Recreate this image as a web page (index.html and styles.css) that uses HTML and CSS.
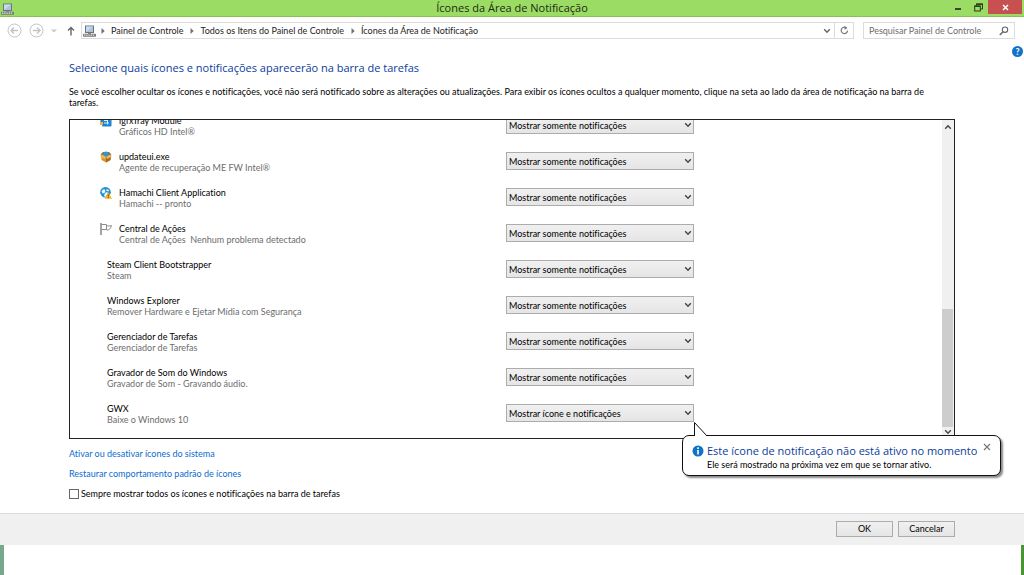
FILE: index.html
```html
<!DOCTYPE html>
<html lang="pt-BR">
<head>
<meta charset="utf-8">
<title>Ícones da Área de Notificação</title>
<link rel="stylesheet" href="styles.css">
</head>
<body>
<svg class="sprite" aria-hidden="true">
  <symbol id="pc" viewBox="0 0 13 12">
    <rect x="2" y=".5" width="9" height="7.5" fill="#6d747c"/>
    <rect x="3" y="1.5" width="7" height="5.5" fill="#a9c4dc"/>
    <path d="M3 7V1.5h7z" fill="#c9dbea"/>
    <rect x="5" y="8" width="3" height="1" fill="#8a8a8a"/>
    <rect x="0" y="8.7" width="13" height="3" rx=".6" fill="#77797c"/>
    <path d="M1 10.2h11" stroke="#e4e4e4" stroke-width="1.2" stroke-dasharray="1.4 .8"/>
  </symbol>
  <symbol id="chev" viewBox="0 0 8 6"><path d="M1.200 1.200L4 4.200l2.800-3" fill="none" stroke="currentColor" stroke-width="1.400"/></symbol>
  <symbol id="sep" viewBox="0 0 4 6"><path d="M.5 0L3.7 3 .5 6z" fill="#707070"/></symbol>
</svg>

<header class="titlebar">
  <svg class="app-icon"><use href="#pc"/></svg>
  <h1 class="window-title">Ícones da Área de Notificação</h1>
  <div class="window-controls">
    <button class="win-btn" type="button" aria-label="Minimizar"><svg width="8" height="8" viewBox="0 0 8 8"><path d="M1 6h6" stroke="#222" stroke-width="1.6"/></svg></button>
    <button class="win-btn" type="button" aria-label="Restaurar"><svg width="9" height="9" viewBox="0 0 9 9" fill="none" stroke="#2b3a1c"><path d="M2.5 2.5v-1.500h6v5h-2"/><path d="M2 1.200h7" stroke-width="1.300"/><rect x=".7" y="3" width="5.600" height="5"/><path d="M.5 3.200h6" stroke-width="1.300"/></svg></button>
    <button class="win-btn win-close" type="button" aria-label="Fechar"><svg width="7" height="7" viewBox="0 0 7 7"><path d="M1 1l5 5M6 1L1 6" stroke="#fff" stroke-width="1.500"/></svg></button>
  </div>
</header>

<nav class="toolbar">
  <button class="nav-btn" type="button" aria-label="Voltar"><svg width="15" height="15" viewBox="0 0 15 15" fill="none" stroke="#c4c4c4"><circle cx="7.500" cy="7.500" r="6.500"/><path d="M11 7.500H4.500M7 4.500l-3 3 3 3" stroke-width="1.400"/></svg></button>
  <button class="nav-btn" type="button" aria-label="Avançar"><svg width="15" height="15" viewBox="0 0 15 15" fill="none" stroke="#c4c4c4"><circle cx="7.500" cy="7.500" r="6.500"/><path d="M4 7.500h6.500M8 4.500l3 3-3 3" stroke-width="1.400"/></svg></button>
  <button class="nav-btn nav-recent" type="button" aria-label="Locais recentes"><svg width="6" height="4" viewBox="0 0 6 4"><path d="M0 .5h6L3 3.500z" fill="#c8c8c8"/></svg></button>
  <button class="nav-btn nav-up" type="button" aria-label="Acima"><svg width="8" height="10" viewBox="0 0 8 10" fill="none" stroke="#666" stroke-width="1.400"><path d="M4 9.500V1.500M1 4.500l3-3 3 3"/></svg></button>
  <div class="address">
    <svg class="app-icon"><use href="#pc"/></svg>
    <svg class="sep"><use href="#sep"/></svg>
    <a class="crumb" href="#">Painel de Controle</a>
    <svg class="sep"><use href="#sep"/></svg>
    <a class="crumb" href="#">Todos os Itens do Painel de Controle</a>
    <svg class="sep"><use href="#sep"/></svg>
    <a class="crumb" href="#">Ícones da Área de Notificação</a>
    <button class="addr-btn addr-drop" type="button" aria-label="Histórico"><svg class="chev"><use href="#chev"/></svg></button>
    <button class="addr-btn addr-refresh" type="button" aria-label="Atualizar"><svg width="9" height="9" viewBox="0 0 9 9"><path d="M6.300 1.800A3.200 3.200 0 1 0 7.600 4.600" fill="none" stroke="#777" stroke-width="1.200"/><path d="M4.500 0v3.800L7.500 2z" fill="#777"/></svg></button>
  </div>
  <label class="search">
    <input class="search-input" type="text" placeholder="Pesquisar Painel de Controle" aria-label="Pesquisar Painel de Controle">
    <svg width="10" height="10" viewBox="0 0 10 10" fill="none" stroke="#666"><circle cx="6" cy="3.700" r="2.700" stroke-width="1.100"/><path d="M4 5.700L.8 9" stroke-width="1.500"/></svg>
  </label>
</nav>

<main class="content">
  <button class="help" type="button" aria-label="Ajuda">?</button>
  <h2 class="heading">Selecione quais ícones e notificações aparecerão na barra de tarefas</h2>
  <p class="intro">Se você escolher ocultar os ícones e notificações, você não será notificado sobre as alterações ou atualizações. Para exibir os ícones ocultos a qualquer momento, clique na seta ao lado da área de notificação na barra de tarefas.</p>

  <section class="frame">
    <ul class="list">
      <li class="row">
        <svg class="row-icon" viewBox="0 0 12 12"><rect x=".5" y="1" width="9" height="8" fill="#1b77c5"/><rect x="2" y="3" width="9.500" height="8.500" rx="1" fill="#1d84d6"/><rect x="0" y="7" width="3" height="3" fill="#e5b83c"/><path d="M4 5.500h3M4 8h5M7.500 4.500v5" stroke="#d9efff" stroke-width="1"/><path d="M8 3l3.500 0v3z" fill="#7fc36a"/></svg>
        <label class="name" for="s1">igfxTray Module</label><span class="detail">Gráficos HD Intel®</span>
        <span class="picker"><select class="select" id="s1"><option>Mostrar somente notificações</option></select><svg class="chev"><use href="#chev"/></svg></span>
      </li>
      <li class="row">
        <svg class="row-icon" viewBox="0 0 12 12"><path d="M1 4l5 2 5-2-.5 5L6 11.500 1.500 9z" fill="#d9982c"/><path d="M6 6l5-2-.5 5L6 11.500z" fill="#a9671b"/><path d="M.5 3.500L3 1h6l2.500 2.500L6 6z" fill="#8a6a35"/><circle cx="6" cy="3.200" r="2.700" fill="#3696c9"/><path d="M0 5l2-1.500L6 6 4.500 8zM12 5l-2-1.500L6 6l1.500 2z" fill="#efbb55"/></svg>
        <label class="name" for="s2">updateui.exe</label><span class="detail">Agente de recuperação ME FW Intel®</span>
        <span class="picker"><select class="select" id="s2"><option>Mostrar somente notificações</option></select><svg class="chev"><use href="#chev"/></svg></span>
      </li>
      <li class="row">
        <svg class="row-icon" viewBox="0 0 12 12"><circle cx="5.500" cy="5.300" r="5.300" fill="#1c8fd6"/><path d="M1.500 4l2.500-2 1.500 1.500-1 2.500-2 .5zM6.500 2l2.500 1-.5 1.500-2-.5zM5 6l2-1 1 1-2.500 4-1.500-1z" fill="#f4fafe"/><path d="M8.300 5.300l3.700 6.500H4.700z" fill="#f6b61c"/><path d="M8.300 7.500v2M8.300 10.200v1" stroke="#7a4a00" stroke-width="1"/></svg>
        <label class="name" for="s3">Hamachi Client Application</label><span class="detail">Hamachi -- pronto</span>
        <span class="picker"><select class="select" id="s3"><option>Mostrar somente notificações</option></select><svg class="chev"><use href="#chev"/></svg></span>
      </li>
      <li class="row">
        <svg class="row-icon" viewBox="0 0 12 12" fill="none" stroke="#8c8c8c"><path d="M.5 0v12M1.500 0v12" stroke-width=".8"/><path d="M1.500 1.500h5v5h-5M6.500 2.500c2 .8 3 .6 5 0-.8 2.800-2 4.800-5 4.500"/></svg>
        <label class="name" for="s4">Central de Ações</label><span class="detail">Central de Ações&nbsp; Nenhum problema detectado</span>
        <span class="picker"><select class="select" id="s4"><option>Mostrar somente notificações</option></select><svg class="chev"><use href="#chev"/></svg></span>
      </li>
      <li class="row row-plain">
        <label class="name" for="s5">Steam Client Bootstrapper</label><span class="detail">Steam</span>
        <span class="picker"><select class="select" id="s5"><option>Mostrar somente notificações</option></select><svg class="chev"><use href="#chev"/></svg></span>
      </li>
      <li class="row row-plain">
        <label class="name" for="s6">Windows Explorer</label><span class="detail">Remover Hardware e Ejetar Mídia com Segurança</span>
        <span class="picker"><select class="select" id="s6"><option>Mostrar somente notificações</option></select><svg class="chev"><use href="#chev"/></svg></span>
      </li>
      <li class="row row-plain">
        <label class="name" for="s7">Gerenciador de Tarefas</label><span class="detail">Gerenciador de Tarefas</span>
        <span class="picker"><select class="select" id="s7"><option>Mostrar somente notificações</option></select><svg class="chev"><use href="#chev"/></svg></span>
      </li>
      <li class="row row-plain">
        <label class="name" for="s8">Gravador de Som do Windows</label><span class="detail">Gravador de Som - Gravando áudio.</span>
        <span class="picker"><select class="select" id="s8"><option>Mostrar somente notificações</option></select><svg class="chev"><use href="#chev"/></svg></span>
      </li>
      <li class="row row-plain">
        <label class="name" for="s9">GWX</label><span class="detail">Baixe o Windows 10</span>
        <span class="picker"><select class="select" id="s9"><option>Mostrar ícone e notificações</option></select><svg class="chev"><use href="#chev"/></svg></span>
      </li>
    </ul>
    <div class="scrollbar" aria-hidden="true">
      <svg class="chev chev-up"><use href="#chev"/></svg>
      <div class="track"><div class="thumb"></div></div>
      <svg class="chev"><use href="#chev"/></svg>
    </div>
    <aside class="balloon" role="status">
      <svg class="balloon-tail" width="16" height="16" viewBox="0 0 16 16"><path d="M1.500 15.500V1.500l12.500 14z" fill="#fff"/><path d="M1.500 15V1.500L14 15" fill="none" stroke="#111"/></svg>
      <svg class="info" viewBox="0 0 12 12"><circle cx="6" cy="6" r="5.500" fill="#1173c7"/><path d="M6 2.300v1.600M6 4.900v4.600" stroke="#fff" stroke-width="1.600"/></svg>
      <strong class="balloon-title">Este ícone de notificação não está ativo no momento</strong>
      <button class="balloon-close" type="button" aria-label="Fechar aviso"><svg width="8" height="8" viewBox="0 0 8 8"><path d="M1 1l6 6M7 1L1 7" stroke="#777" stroke-width="1.200"/></svg></button>
      <span class="balloon-text">Ele será mostrado na próxima vez em que se tornar ativo.</span>
    </aside>
  </section>

  <div class="links">
    <a class="link" href="#">Ativar ou desativar ícones do sistema</a>
    <a class="link" href="#">Restaurar comportamento padrão de ícones</a>
    <label class="check"><input class="check-box" type="checkbox">Sempre mostrar todos os ícones e notificações na barra de tarefas</label>
  </div>
</main>

<footer class="actions">
  <button class="btn" type="button">OK</button>
  <button class="btn" type="button">Cancelar</button>
</footer>
<div class="desktop"></div>
</body>
</html>
```

FILE: styles.css
```css
* { box-sizing: border-box; }
body {
  margin: 0;
  min-height: 100vh;
  display: flex;
  flex-direction: column;
  background: #fff;
  color: #000;
  font: 9px/11px Lato, "Open Sans", sans-serif;
  font-variant-ligatures: none;
}
button, input, select { font: inherit; font-variant-ligatures: none; color: inherit; }
button { padding: 0; border: 0; background: none; }
svg { display: block; flex: none; }
.sprite { position: absolute; width: 0; height: 0; }
.app-icon { width: 13px; height: 12px; }
.chev { width: 8px; height: 6px; color: #444; }

.window-title, .heading, .balloon-title {
  margin: 0;
  font-family: "Open Sans", "Noto Sans", sans-serif;
  font-size: 11px;
  line-height: 16px;
  font-weight: 400;
  color: #0a3d9b;
}

.titlebar {
  display: grid;
  grid-template-columns: 80px 1fr 80px;
  height: 17px;
  background: #9bdc65;
  border-bottom: 1px solid #85c24f;
}
.titlebar .app-icon { margin: 3px 0 0 1px; }
.window-title { text-align: center; color: #1d2b10; }
.window-controls { display: flex; justify-content: flex-end; align-items: flex-start; padding-right: 2px; }
.win-btn { width: 20px; height: 14px; display: flex; align-items: center; justify-content: center; }
.win-close { width: 34px; background: #c75050; }

.toolbar { display: flex; align-items: center; height: 27px; padding: 0 9px 0 7px; }
.nav-btn { display: flex; margin-right: 7px; }
.nav-recent { margin-right: 10px; }
.nav-up { margin-right: 6px; }
.address { flex: 1; display: flex; align-items: center; height: 17px; border: 1px solid #dcdcdc; padding-left: 1px; }
.sep { width: 4px; height: 6px; margin: 0 6px 0 7px; }
.app-icon + .sep { margin-left: 5px; }
.crumb { color: #1e1e1e; text-decoration: none; white-space: nowrap; }
.addr-btn { display: flex; align-items: center; justify-content: center; width: 14px; height: 15px; }
.addr-btn .chev { color: #666; }
.addr-drop { margin-left: auto; }
.addr-refresh { width: 19px; border-left: 1px solid #dcdcdc; }
.search { display: flex; align-items: center; width: 152px; height: 17px; margin-left: 9px; padding: 0 5px; border: 1px solid #dcdcdc; }
.search-input { flex: 1; min-width: 0; border: 0; padding: 0; outline: 0; background: none; }
.search-input::placeholder { color: #6d6d6d; opacity: 1; }

.content { position: relative; flex: 1; display: flex; flex-direction: column; padding: 16px 69px 14px; }
.help {
  position: absolute; top: 2px; right: 1px;
  width: 11px; height: 11px; border-radius: 50%;
  background: #1173c7; color: #fff; font-weight: 700; line-height: 11px;
}
.intro { margin: 10px 0 11px; }

.frame { position: relative; flex: 1 1 0; min-height: 160px; display: flex; border: 1px solid #222; }
.list {
  flex: 1; min-width: 0; margin: 0; padding: 0 0 0 30px; list-style: none;
  display: flex; flex-direction: column; justify-content: flex-end; overflow: hidden;
}
.row {
  flex: none; display: grid; height: 36px; padding-top: 1px; align-content: start;
  grid-template-columns: 19px 1fr 188px 248px;
  grid-template-rows: 11px 11px;
}
.row-icon { width: 12px; height: 12px; grid-area: 1 / 1; }
.name { grid-area: 1 / 2; }
.detail { grid-area: 2 / 2; color: #6d6d6d; white-space: nowrap; }
.row-plain { grid-template-columns: 7px 1fr 188px 248px; }
.picker { grid-area: 1 / 3 / 3 / 4; display: grid; align-items: center; height: 18px; margin-top: 1px; }
.select {
  grid-area: 1 / 1; appearance: none; width: 100%; height: 18px; margin: 0;
  padding: 0 16px 0 2px; border: 1px solid #acacac; border-radius: 0;
  background: linear-gradient(#f0f0f0, #e5e5e5);
}
.picker .chev { grid-area: 1 / 1; justify-self: end; margin-right: 2px; pointer-events: none; }

.scrollbar { width: 12px; display: flex; flex-direction: column; align-items: center; padding: 4px 0 3px; background: #f0f0f0; }
.chev-up { transform: rotate(180deg); }
.track { flex: 1; width: 100%; display: flex; flex-direction: column; justify-content: flex-end; padding: 2px 1px 2px 0; }
.thumb { height: 40%; background: #cdcdcd; }

.balloon {
  position: absolute; top: calc(100% - 3px); right: -47px;
  display: grid; grid-template-columns: 15px 1fr 12px;
  width: 319px; padding: 7px 9px 5px 9px;
  background: #fff; border: 1px solid #111; border-radius: 7px;
  box-shadow: 2px 2px 2px #888;
}
.balloon-tail { position: absolute; left: 10px; top: -15px; }
.info { width: 12px; height: 12px; margin-top: 2px; }
.balloon-title { white-space: nowrap; }
.balloon-close { justify-self: end; align-self: start; }
.balloon-text { grid-column: 2; }

.links { display: flex; flex-direction: column; align-items: flex-start; gap: 9px; padding-top: 9px; }
.link { color: #0a6cd0; text-decoration: none; }
.check { display: flex; align-items: center; gap: 2px; }
.check-box { appearance: none; width: 10px; height: 10px; margin: 0; border: 1px solid #666; background: #fff; }

.actions { display: flex; justify-content: flex-end; gap: 5px; height: 32px; padding: 7px 69px 0; background: #f0f0f0; border-top: 1px solid #dcdcdc; }
.btn { width: 57px; height: 16px; border: 1px solid #acacac; background: linear-gradient(#f0f0f0, #e5e5e5); line-height: 14px; }
.desktop { height: 30px; border-left: 4px solid #78a88c; border-right: 3px solid #469632; }
```
